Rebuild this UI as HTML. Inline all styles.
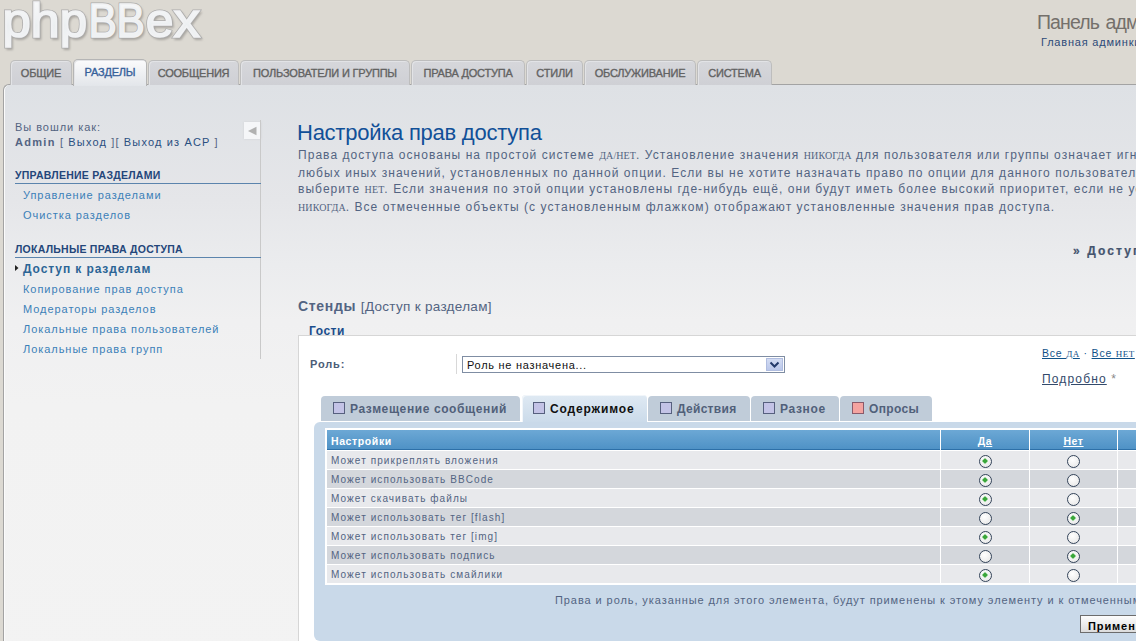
<!DOCTYPE html>
<html><head><meta charset="utf-8">
<style>
*{margin:0;padding:0;box-sizing:border-box}
html,body{width:1136px;height:641px;overflow:hidden}
body{background:#dcd9d2;font-family:"Liberation Sans",sans-serif;position:relative;color:#536482}
.a{position:absolute;white-space:nowrap;line-height:1}
.sc{font-family:"Liberation Serif",serif;font-size:10px;letter-spacing:0.1px}
.sc2{font-family:"Liberation Serif",serif;font-size:9px;letter-spacing:0.5px}
#logo{left:4px;top:-7px;font-size:53px;color:#eef0f3;letter-spacing:-1px;transform:scaleX(0.93);transform-origin:0 0;-webkit-text-stroke:1.2px #f2f3f5;
 text-shadow:0 0 1px #8f8f8f,1px 1px 1px #9d9a95,2px 2px 2px #bdbab4}
.tab{position:absolute;top:60px;height:25px;background:linear-gradient(#d6d7db,#cfd0d5);border:1px solid #bdbdbd;box-shadow:inset 1px 1px 0 #e2e3e6;border-bottom:none;border-radius:5px 5px 0 0;z-index:2}
.tab span{position:absolute;left:0;right:0;top:7px;text-align:center;font-size:11px;line-height:1;color:#626262;letter-spacing:-0.2px;-webkit-text-stroke:0.35px #626262}
.tab.act{top:59px;height:27px;background:linear-gradient(#fbfbfc,#e3e6ea);border-color:#b5b5b5;z-index:3}
.tab.act span{top:7.4px;color:#35609a;-webkit-text-stroke:0.35px #35609a}
#panel{position:absolute;left:3px;top:84px;width:1200px;height:600px;border:1px solid #a3a3a3;border-right:none;border-bottom:none;border-radius:6px 0 0 0;
 background:linear-gradient(#dee1e5 0px,#e5e6e9 116px,#ebecee 180px,#f0f0f1 236px,#f2f2f2 320px,#f3f3f3 600px);box-shadow:inset 1px 0 0 #fbfbfb;z-index:1}
.side{font-size:11px;letter-spacing:0.95px}
.sh{font-size:10.5px;font-weight:bold;color:#24467a;letter-spacing:0.25px}
.sline{position:absolute;left:15px;width:246px;height:1px;background:#5b84ad}
.menu{font-size:11px;letter-spacing:0.95px;color:#3b80b8}
.ptab{position:absolute;top:396px;height:25px;background:#c0ccd9;border-radius:4px 4px 0 0}
.ptab.act{top:395px;height:27px;background:linear-gradient(#dfe9f3,#cbdbea);box-shadow:inset 1px 1px 0 #f2f6fa;z-index:1}
.ptab span{position:absolute;top:402.8px;top:6.8px;font-size:12px;font-weight:bold;line-height:1;white-space:nowrap;color:#51607a}
.ptab.act span{top:7.8px;color:#111}
.cb{position:absolute;left:12px;top:6px;width:12px;height:12px;background:#c3c3e6;border:1px solid #56607e}
.ptab.act .cb{top:7px}
.th{height:20px;background:linear-gradient(#6ca8d5,#4f92c6);border-bottom:1px solid #2d70a8}
.th span{position:absolute;top:6px;font-size:10.5px;font-weight:bold;color:#fff;line-height:1;letter-spacing:0.6px}
.thc{display:block;text-align:center;margin-top:6px;font-size:10.5px;font-weight:bold;color:#fff;line-height:1;letter-spacing:0.6px}
.row{height:18px}
.r1{background:#e8e9ec}
.r2{background:#d4d7dc}
.row span{position:absolute;left:4px;top:4.5px;font-size:10px;line-height:1;color:#536482;letter-spacing:1.08px}
.rad{position:absolute;left:50%;top:4px;margin-left:-6.5px;width:13px;height:13px;border-radius:50%;border:1.5px solid #34445a;background:radial-gradient(circle at 40% 35%,#fff,#e4e4e4)}
.rad.on::after{content:"";position:absolute;left:3px;top:3px;width:4px;height:4px;background:#3aa63a;transform:rotate(45deg);box-shadow:0 0 1px #7ad07a}
.btn{border:1px solid #6c6c6c;background:linear-gradient(#fdfdfd,#dcdcdc)}
.btn span{position:absolute;left:7px;top:4.6px;font-size:11px;font-weight:bold;color:#000;line-height:1;letter-spacing:0.9px}
</style></head>
<body>
<svg class="a" style="left:0;top:0" width="215" height="56"><defs><linearGradient id="lg" x1="0" y1="0" x2="0" y2="1"><stop offset="0" stop-color="#fbfcfc"/><stop offset="0.6" stop-color="#eceff1"/><stop offset="1" stop-color="#f4f5f6"/></linearGradient><filter id="sh" x="-10%" y="-10%" width="120%" height="130%"><feGaussianBlur stdDeviation="1"/></filter></defs>
<g font-family="Liberation Sans" font-size="53">
<g transform="translate(1.5,1.5)" fill="#a8a5a0" stroke="#a8a5a0" stroke-width="2" filter="url(#sh)"><text transform="translate(2.42,37.3) scale(0.96,0.92)">p</text><text transform="translate(30.54,37.3) scale(0.99,0.92)">h</text><text transform="translate(59.8,37.3) scale(0.93,0.92)">p</text><text transform="translate(88.4,37.3) scale(0.8,0.92)">B</text><text transform="translate(116.4,37.3) scale(0.8,0.92)">B</text><text transform="translate(145.8,37.3) scale(0.94,0.92)">e</text><text transform="translate(173.5,37.3) scale(1.0,0.92)">x</text></g>
<g fill="#a9a9a9" stroke="#acacac" stroke-width="3.4"><text transform="translate(2.42,37.3) scale(0.96,0.92)">p</text><text transform="translate(30.54,37.3) scale(0.99,0.92)">h</text><text transform="translate(59.8,37.3) scale(0.93,0.92)">p</text><text transform="translate(88.4,37.3) scale(0.8,0.92)">B</text><text transform="translate(116.4,37.3) scale(0.8,0.92)">B</text><text transform="translate(145.8,37.3) scale(0.94,0.92)">e</text><text transform="translate(173.5,37.3) scale(1.0,0.92)">x</text></g>
<g fill="url(#lg)" stroke="#f1f2f4" stroke-width="1.8"><text transform="translate(2.42,37.3) scale(0.96,0.92)">p</text><text transform="translate(30.54,37.3) scale(0.99,0.92)">h</text><text transform="translate(59.8,37.3) scale(0.93,0.92)">p</text><text transform="translate(88.4,37.3) scale(0.8,0.92)">B</text><text transform="translate(116.4,37.3) scale(0.8,0.92)">B</text><text transform="translate(145.8,37.3) scale(0.94,0.92)">e</text><text transform="translate(173.5,37.3) scale(1.0,0.92)">x</text></g>
</g></svg>
<div class="a" style="left:1037px;top:13.2px;font-size:19.5px;color:#74706b;letter-spacing:-0.9px;word-spacing:2px">Панель администрирования</div>
<div class="a" style="left:1041px;top:37.2px;font-size:11px;color:#2c4a78;letter-spacing:0.8px">Главная админки</div>

<div class="tab" style="left:10px;width:62px"><span>ОБЩИЕ</span></div>
<div class="tab act" style="left:73px;width:74px"><span>РАЗДЕЛЫ</span></div>
<div class="tab" style="left:148px;width:91px"><span>СООБЩЕНИЯ</span></div>
<div class="tab" style="left:240px;width:170px"><span>ПОЛЬЗОВАТЕЛИ И ГРУППЫ</span></div>
<div class="tab" style="left:411px;width:114px"><span>ПРАВА ДОСТУПА</span></div>
<div class="tab" style="left:526px;width:57px"><span>СТИЛИ</span></div>
<div class="tab" style="left:584px;width:112px"><span>ОБСЛУЖИВАНИЕ</span></div>
<div class="tab" style="left:697px;width:75px"><span>СИСТЕМА</span></div>

<div id="panel"></div>
<div id="content" style="position:absolute;left:0;top:0;width:1136px;height:641px;z-index:4">
 <!-- sidebar -->
 <div class="a side" style="left:15px;top:121.7px">Вы вошли как:</div>
 <div class="a side" style="left:15px;top:137.4px;letter-spacing:1.15px"><b style="letter-spacing:1.3px">Admin</b> [ <span style="color:#2a4f80">Выход</span> ][ <span style="color:#2a4f80">Выход из ACP</span> ]</div>
 <div class="a" style="left:244px;top:122px;width:17px;height:17px;background:#f5f6f8;box-shadow:0 0 2px #cfd1d4"></div>
 <svg class="a" style="left:244px;top:122px" width="17" height="17"><path d="M4 9 L12.5 4.8 L12.5 13.2 Z" fill="#b1b1b1"/></svg>
 <div class="a" style="left:260px;top:120px;width:1px;height:239px;background:#c9c9c9"></div>

 <div class="a sh" style="left:15px;top:170.1px">УПРАВЛЕНИЕ РАЗДЕЛАМИ</div>
 <div class="sline" style="top:183px"></div>
 <div class="a menu" style="left:23px;top:189.7px">Управление разделами</div>
 <div class="a menu" style="left:23px;top:209.7px">Очистка разделов</div>

 <div class="a sh" style="left:15px;top:244.1px">ЛОКАЛЬНЫЕ ПРАВА ДОСТУПА</div>
 <div class="sline" style="top:257px"></div>
 <svg class="a" style="left:15px;top:265px" width="4" height="6"><path d="M0 0 L3.5 3 L0 6 Z" fill="#222"/></svg>
 <div class="a menu" style="left:23px;top:262.8px;font-size:12px;font-weight:bold;color:#2c6596;letter-spacing:0.9px">Доступ к разделам</div>
 <div class="a menu" style="left:23px;top:284.2px">Копирование прав доступа</div>
 <div class="a menu" style="left:23px;top:304.2px">Модераторы разделов</div>
 <div class="a menu" style="left:23px;top:324.2px">Локальные права пользователей</div>
 <div class="a menu" style="left:23px;top:344.2px">Локальные права групп</div>

 <!-- main -->
 <div class="a" style="left:297px;top:121.6px;font-size:22px;color:#115098;letter-spacing:-0.25px">Настройка прав доступа</div>
 <div class="a" style="left:298px;top:146.6px;font-size:12px;line-height:16.9px;letter-spacing:1.05px;color:#536482">Права доступа основаны на простой системе <span class="sc">ДА/НЕТ</span>. Установление значения <span class="sc">НИКОГДА</span> для пользователя или группы означает игнорирование<br>любых иных значений, установленных по данной опции. Если вы не хотите назначать право по опции для данного пользователя или группы,<br>выберите <span class="sc">НЕТ</span>. Если значения по этой опции установлены где-нибудь ещё, они будут иметь более высокий приоритет, если не установлено<br><span class="sc">НИКОГДА</span>. Все отмеченные объекты (с установленным флажком) отображают установленные значения прав доступа.</div>

 <div class="a" style="left:1073px;top:245.1px;font-size:12px;font-weight:bold;color:#44546e;letter-spacing:2.1px;-webkit-text-stroke:0.2px #44546e">»&nbsp;Доступ к разделам</div>

 <div class="a" style="left:298px;top:298.8px;font-size:14px;font-weight:bold;color:#536482;letter-spacing:0.7px">Стенды <span style="font-weight:normal;font-size:13.5px;letter-spacing:0.3px">[Доступ к разделам]</span></div>

 <!-- fieldset -->
 <div class="a" style="left:298px;top:335px;width:900px;height:400px;background:#fff;border:1px solid #d6d6d6"></div>
 <div class="a" style="left:309px;top:325.1px;font-size:12px;font-weight:bold;color:#1a4d8c;letter-spacing:0.5px">Гости</div>
 <div class="a" style="left:310px;top:358.7px;font-size:11px;font-weight:bold;color:#4c5d77;letter-spacing:0.85px">Роль:</div>
 <div class="a" style="left:456px;top:354px;width:1px;height:20px;background:#d8d8d8"></div>
 <div class="a" style="left:462px;top:356px;width:323px;height:17px;border:1px solid #7f8da3;background:#fff"></div>
 <div class="a" style="left:467px;top:359.5px;font-size:11px;color:#111;letter-spacing:0.72px">Роль не назначена...</div>
 <div class="a" style="left:766px;top:358px;width:17px;height:13px;background:linear-gradient(#d3dcf3,#bac7ea);border:1px solid #b0bde0"></div>
 <svg class="a" style="left:766px;top:358px" width="17" height="13"><path d="M4.5 4.5 L8.5 8.5 L12.5 4.5" stroke="#233a6a" stroke-width="2" fill="none"/></svg>

 <div class="a" style="left:1042px;top:348.4px;font-size:10.5px;color:#105289;letter-spacing:0.8px"><u>Все <span class="sc2">ДА</span></u> · <u>Все <span class="sc2">НЕТ</span></u></div>
 <div class="a" style="left:1042px;top:372.5px;font-size:12px;color:#334a6b;letter-spacing:1.15px"><u>Подробно</u> <span style="color:#888">*</span></div>


 <!-- perm tabs -->
 <div class="ptab" style="left:321px;width:199px"><i class="cb"></i><span style="left:29px;letter-spacing:0.6px">Размещение сообщений</span></div>
 <div class="ptab act" style="left:522px;width:125px"><i class="cb" style="left:11px"></i><span style="left:28px;letter-spacing:0.85px">Содержимое</span></div>
 <div class="ptab" style="left:648px;width:102px"><i class="cb"></i><span style="left:29px;letter-spacing:0.3px">Действия</span></div>
 <div class="ptab" style="left:751px;width:88px"><i class="cb"></i><span style="left:29px;letter-spacing:0.65px">Разное</span></div>
 <div class="ptab" style="left:840px;width:92px"><i class="cb" style="background:#f4a3a0;border-color:#8a5a6a"></i><span style="left:29px;letter-spacing:0.35px">Опросы</span></div>
 <div class="a" style="left:314px;top:422px;width:900px;height:219px;background:#c9d9e9;border-radius:6px 0 0 6px"></div>
 <div class="a" style="left:325px;top:428px;width:900px;height:157px;background:#fff"></div>
 <div class="a th" style="left:327px;top:430px;width:613px"><span style="left:4px">Настройки</span></div>
 <div class="a th" style="left:941px;top:430px;width:88px"><u class="thc">Да</u></div>
 <div class="a th" style="left:1030px;top:430px;width:87px"><u class="thc">Нет</u></div>
 <div class="a th" style="left:1118px;top:430px;width:100px"></div>

 <div class="a row r1" style="left:327px;top:451px;width:613px"><span>Может прикреплять вложения</span></div>
 <div class="a row r1" style="left:941px;top:451px;width:88px"><i class="rad on"></i></div>
 <div class="a row r1" style="left:1030px;top:451px;width:87px"><i class="rad"></i></div>
 <div class="a row r1" style="left:1118px;top:451px;width:100px"></div>
 <div class="a row r2" style="left:327px;top:470px;width:613px"><span>Может использовать BBCode</span></div>
 <div class="a row r2" style="left:941px;top:470px;width:88px"><i class="rad on"></i></div>
 <div class="a row r2" style="left:1030px;top:470px;width:87px"><i class="rad"></i></div>
 <div class="a row r2" style="left:1118px;top:470px;width:100px"></div>
 <div class="a row r1" style="left:327px;top:489px;width:613px"><span>Может скачивать файлы</span></div>
 <div class="a row r1" style="left:941px;top:489px;width:88px"><i class="rad on"></i></div>
 <div class="a row r1" style="left:1030px;top:489px;width:87px"><i class="rad"></i></div>
 <div class="a row r1" style="left:1118px;top:489px;width:100px"></div>
 <div class="a row r2" style="left:327px;top:508px;width:613px"><span>Может использовать тег [flash]</span></div>
 <div class="a row r2" style="left:941px;top:508px;width:88px"><i class="rad"></i></div>
 <div class="a row r2" style="left:1030px;top:508px;width:87px"><i class="rad on"></i></div>
 <div class="a row r2" style="left:1118px;top:508px;width:100px"></div>
 <div class="a row r1" style="left:327px;top:527px;width:613px"><span>Может использовать тег [img]</span></div>
 <div class="a row r1" style="left:941px;top:527px;width:88px"><i class="rad on"></i></div>
 <div class="a row r1" style="left:1030px;top:527px;width:87px"><i class="rad"></i></div>
 <div class="a row r1" style="left:1118px;top:527px;width:100px"></div>
 <div class="a row r2" style="left:327px;top:546px;width:613px"><span>Может использовать подпись</span></div>
 <div class="a row r2" style="left:941px;top:546px;width:88px"><i class="rad"></i></div>
 <div class="a row r2" style="left:1030px;top:546px;width:87px"><i class="rad on"></i></div>
 <div class="a row r2" style="left:1118px;top:546px;width:100px"></div>
 <div class="a row r1" style="left:327px;top:565px;width:613px"><span>Может использовать смайлики</span></div>
 <div class="a row r1" style="left:941px;top:565px;width:88px"><i class="rad on"></i></div>
 <div class="a row r1" style="left:1030px;top:565px;width:87px"><i class="rad"></i></div>
 <div class="a row r1" style="left:1118px;top:565px;width:100px"></div>

 <div class="a" style="left:555px;top:595px;font-size:11px;color:#536482;letter-spacing:0.92px">Права и роль, указанные для этого элемента, будут применены к этому элементу и к отмеченным объектам.</div>
 <div class="a btn" style="left:1080px;top:615px;width:100px;height:18px"><span>Применить</span></div>

</div>
</body></html>
